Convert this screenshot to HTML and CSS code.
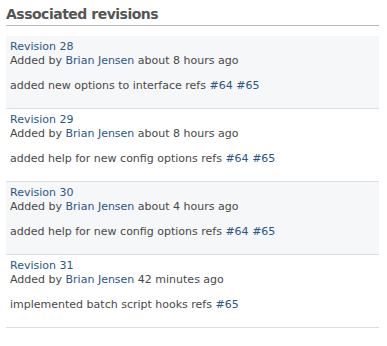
FILE: index.html
```html
<!DOCTYPE html>
<html>
  <head>
    <meta charset="UTF-8" />
    <title>Associated revisions</title>
    <link rel="stylesheet" href="styles.css">
  </head>
  <body>
    <div id="issue-changesets">
      <h3>Associated revisions</h3>

      <div class="changeset odd">
        <p>
          <a href="#">Revision 28</a><br />
          Added by <a href="#">Brian Jensen</a> about 8 hours ago
        </p>
        <p>added new options to interface refs <a href="#">#64</a> <a href="#">#65</a></p>
      </div>

      <div class="changeset even">
        <p>
          <a href="#">Revision 29</a><br />
          Added by <a href="#">Brian Jensen</a> about 8 hours ago
        </p>
        <p>added help for new config options refs <a href="#">#64</a> <a href="#">#65</a></p>
      </div>

      <div class="changeset odd">
        <p>
          <a href="#">Revision 30</a><br />
          Added by <a href="#">Brian Jensen</a> about 4 hours ago
        </p>
        <p>added help for new config options refs <a href="#">#64</a> <a href="#">#65</a></p>
      </div>

      <div class="changeset even">
        <p>
          <a href="#">Revision 31</a><br />
          Added by <a href="#">Brian Jensen</a> 42 minutes ago
        </p>
        <p>implemented batch script hooks refs <a href="#">#65</a></p>
      </div>
    </div>
  </body>
</html>
```

FILE: styles.css
```css
body {
  font-family: "DejaVu Sans", Verdana, sans-serif;
  font-size: 11px;
  line-height: 14px;
  color: #484848;
  background-color: #fff;
  margin: 0;
  padding: 0;
}

a {
  color: #2a5685;
  text-decoration: none;
}

#issue-changesets {
  margin: 0 8px 0 6px;
}

#issue-changesets h3 {
  font-size: 14px;
  line-height: 18px;
  letter-spacing: -0.5px;
  font-weight: bold;
  color: #555;
  margin: 0 0 10px 0;
  padding: 5px 0 2px 0;
  border-bottom: 1px solid #bbb;
}

.changeset {
  padding: 4px;
  border-bottom: 1px solid #ddd;
}

.changeset.odd {
  background-color: #f6f7f8;
}

.changeset p {
  margin: 0 0 11px 0;
}
```
